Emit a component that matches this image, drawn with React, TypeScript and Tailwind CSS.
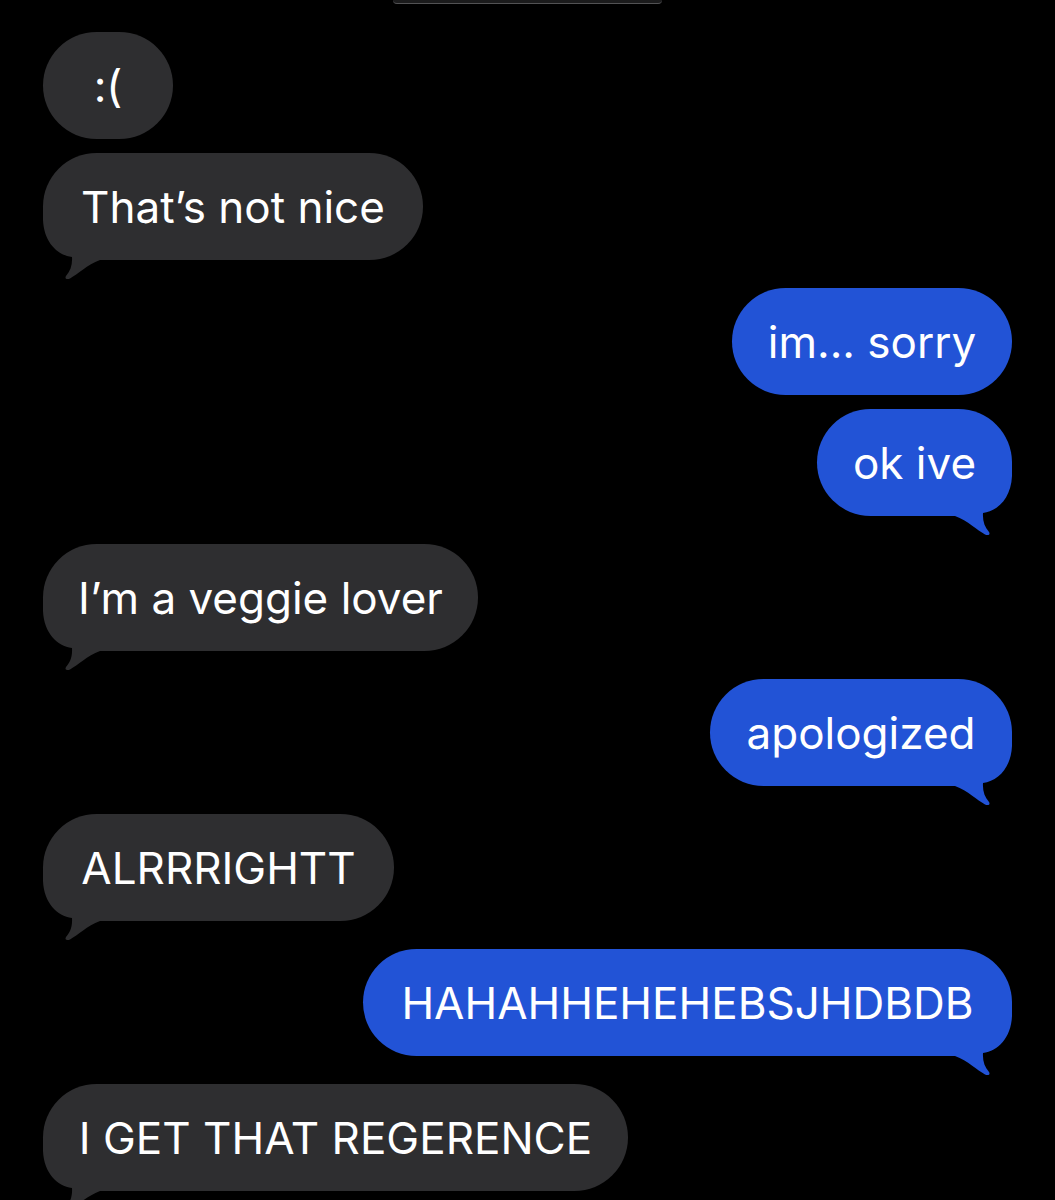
import React from 'react'

type Msg = {
  text: string
  me: boolean
  width: string
  tail: boolean
  gap: string
}

const messages: Msg[] = [
  { text: ':(', me: false, width: 'w-[130px]', tail: false, gap: 'mt-[28px]' },
  { text: 'That’s not nice', me: false, width: 'w-[380px]', tail: true, gap: 'mt-[14px]' },
  { text: 'im... sorry', me: true, width: 'w-[280px]', tail: false, gap: 'mt-[28px]' },
  { text: 'ok ive', me: true, width: 'w-[195px]', tail: true, gap: 'mt-[14px]' },
  { text: 'I’m a veggie lover', me: false, width: 'w-[435px]', tail: true, gap: 'mt-[28px]' },
  { text: 'apologized', me: true, width: 'w-[302px]', tail: true, gap: 'mt-[28px]' },
  { text: 'ALRRRIGHTT', me: false, width: 'w-[351px]', tail: true, gap: 'mt-[28px]' },
  { text: 'HAHAHHEHEHEBSJHDBDB', me: true, width: 'w-[649px]', tail: true, gap: 'mt-[28px]' },
  { text: 'I GET THAT REGERENCE', me: false, width: 'w-[585px]', tail: true, gap: 'mt-[28px]' },
]

// little hook under the bubble, drawn for the left side and mirrored for the right
const Tail = ({ me }: { me: boolean }) => (
  <svg
    width="60"
    height="74"
    viewBox="0 -54 60 74"
    className={
      me
        ? 'absolute right-0 bottom-[-20px] -scale-x-100'
        : 'absolute left-0 bottom-[-20px]'
    }
  >
    <path
      d="M0 -53 L0 -40 C1 -18 14 -5 29 -3 C29.5 5 27.5 11 23 16 C21.5 18.5 23.5 20 27 18.5 C35 14 44 5 57 0 L57 -53 Z"
      fill="currentColor"
    />
  </svg>
)

const Bubble = ({ msg }: { msg: Msg }) => (
  <div
    className={`relative ${msg.gap} ${msg.width} h-[107px] rounded-[54px] flex items-center justify-center ${
      msg.me ? 'self-end bg-[#2253d6] text-[#2253d6]' : 'self-start bg-[#2e2e30] text-[#2e2e30]'
    }`}
  >
    {msg.tail && <Tail me={msg.me} />}
    <span className="relative text-white text-[44px] leading-none whitespace-nowrap">{msg.text}</span>
  </div>
)

export default function App() {
  return (
    <div className="w-full h-[1200px] bg-black overflow-hidden font-['Inter',sans-serif]">
      <div className="ml-[393px] w-[269px] h-[4px] rounded-b-[8px] bg-[#1b1b1c] border-b border-[#525254]" />
      <div className="flex flex-col px-[43px]">
        {messages.map((m, i) => (
          <Bubble key={i} msg={m} />
        ))}
      </div>
    </div>
  )
}
